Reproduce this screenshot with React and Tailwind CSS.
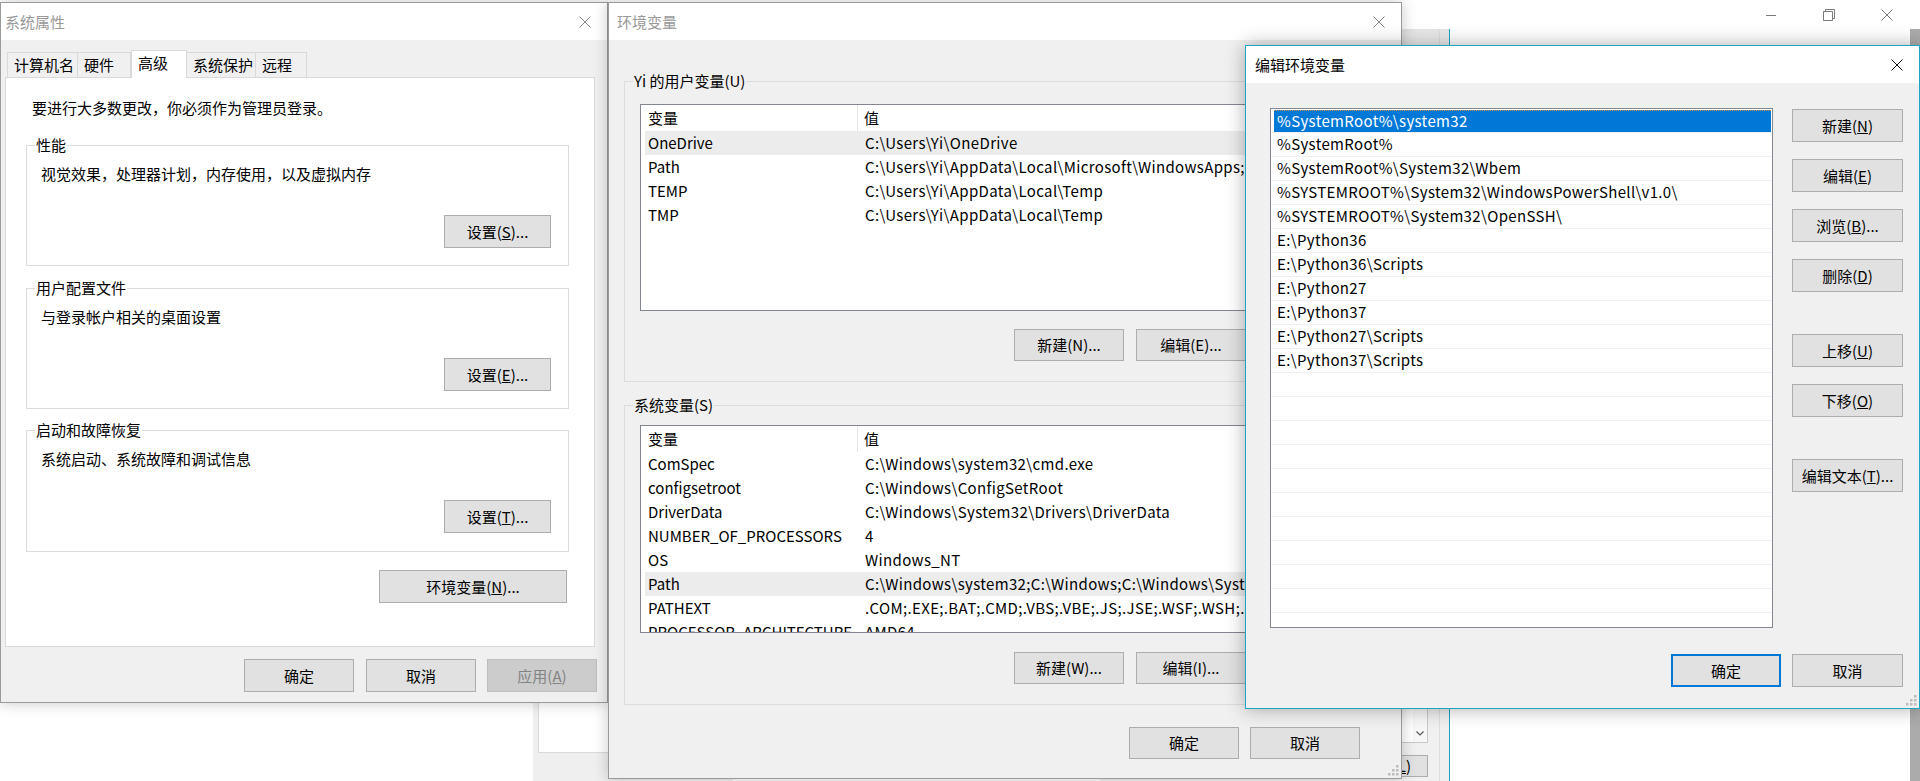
import React from 'react'

const userVars = [
  ['OneDrive', 'C:\\Users\\Yi\\OneDrive', true],
  ['Path', 'C:\\Users\\Yi\\AppData\\Local\\Microsoft\\WindowsApps;'],
  ['TEMP', 'C:\\Users\\Yi\\AppData\\Local\\Temp'],
  ['TMP', 'C:\\Users\\Yi\\AppData\\Local\\Temp'],
]

const sysVars = [
  ['ComSpec', 'C:\\Windows\\system32\\cmd.exe'],
  ['configsetroot', 'C:\\Windows\\ConfigSetRoot'],
  ['DriverData', 'C:\\Windows\\System32\\Drivers\\DriverData'],
  ['NUMBER_OF_PROCESSORS', '4'],
  ['OS', 'Windows_NT'],
  ['Path', 'C:\\Windows\\system32;C:\\Windows;C:\\Windows\\System32\\Wbem;', true],
  ['PATHEXT', '.COM;.EXE;.BAT;.CMD;.VBS;.VBE;.JS;.JSE;.WSF;.WSH;.MSC'],
  ['PROCESSOR_ARCHITECTURE', 'AMD64'],
]

const pathItems = [
  '%SystemRoot%\\system32',
  '%SystemRoot%',
  '%SystemRoot%\\System32\\Wbem',
  '%SYSTEMROOT%\\System32\\WindowsPowerShell\\v1.0\\',
  '%SYSTEMROOT%\\System32\\OpenSSH\\',
  'E:\\Python36',
  'E:\\Python36\\Scripts',
  'E:\\Python27',
  'E:\\Python37',
  'E:\\Python27\\Scripts',
  'E:\\Python37\\Scripts',
]

function CloseX({ color = '#8a8a8a' }) {
  return (
    <svg width="12" height="12" viewBox="0 0 12 12">
      <path d="M0.5 0.5 L11.5 11.5 M11.5 0.5 L0.5 11.5" stroke={color} strokeWidth="1" fill="none" />
    </svg>
  )
}

function Grip() {
  return (
    <svg width="12" height="12" viewBox="0 0 12 12">
      {[[9, 1], [5, 5], [9, 5], [1, 9], [5, 9], [9, 9]].map(([x, y], i) => (
        <rect key={i} x={x} y={y} width="2.5" height="2.5" fill="#bcbcbc" />
      ))}
    </svg>
  )
}

function TitleBar({ title, active, pl }) {
  return (
    <div className="h-[37px] bg-white flex items-center shrink-0">
      <span className={`${pl} ${active ? 'text-black' : 'text-[#999999]'} leading-[20px]`}>{title}</span>
      <div className="ml-auto w-[44px] h-full flex items-center justify-center">
        <CloseX color={active ? '#111111' : '#8a8a8a'} />
      </div>
    </div>
  )
}

function Btn({ children, className = '', disabled, primary }) {
  return (
    <div
      className={`flex items-center justify-center leading-[20px] whitespace-nowrap ${
        disabled
          ? 'bg-[#cccccc] border border-[#bfbfbf] text-[#838383]'
          : primary
          ? 'bg-[#e1e1e1] border-2 border-[#0078d7] text-black'
          : 'bg-[#e1e1e1] border border-[#adadad] text-black'
      } ${className}`}
    >
      {children}
    </div>
  )
}

function Group({ label, className = '', children }) {
  return (
    <div className={`relative border border-[#dcdcdc] flex flex-col ${className}`}>
      <span className="absolute -top-[11px] left-[8px] px-[1px] leading-[20px] bg-inherit whitespace-nowrap">
        {label}
      </span>
      {children}
    </div>
  )
}

function VarList({ rows, className }) {
  return (
    <div className={`border border-[#828790] bg-white overflow-hidden flex flex-col ${className}`}>
      <div className="h-[26px] flex items-center shrink-0">
        <div className="w-[217px] h-full flex items-center pl-[7px] border-r border-[#e5e5e5]">变量</div>
        <div className="pl-[6px]">值</div>
      </div>
      {rows.map(([k, v, hl]) => (
        <div
          key={k}
          className={`h-[24px] shrink-0 ml-[4px] flex items-center whitespace-nowrap ${hl ? 'bg-[#ececec]' : ''}`}
        >
          <div className="w-[220px] pl-[3px]">{k}</div>
          <div className="tracking-[0.35px]">{v}</div>
        </div>
      ))}
    </div>
  )
}

function SystemProps() {
  const tabs = [
    ['计算机名', 'w-[71px]'],
    ['硬件', 'w-[54px]'],
    ['高级', 'w-[56px]', true],
    ['系统保护', 'w-[70px]'],
    ['远程', 'w-[52px]'],
  ]
  return (
    <div className="absolute left-0 top-[2px] w-[608px] h-[701px] border border-[#9b9b9b] bg-[#f0f0f0] flex flex-col shadow-[0_0_14px_rgba(0,0,0,0.22)]">
      <TitleBar title="系统属性" pl="pl-[4px]" />
      <div className="flex flex-col px-[4px] pt-[10px]">
        <div className="flex items-end h-[27px] pl-[2px]">
          {tabs.map(([t, w, sel]) =>
            sel ? (
              <div
                key={t}
                className={`${w} h-[28px] -mb-px relative z-10 bg-white border border-b-0 border-[#d9d9d9] pl-[6px] pb-[2px] flex items-center`}
              >
                {t}
              </div>
            ) : (
              <div
                key={t}
                className={`${w} h-[25px] bg-[#f0f0f0] border border-b-0 border-[#d9d9d9] -ml-px first:ml-0 pl-[6px] pt-[1px] flex items-center`}
              >
                {t}
              </div>
            )
          )}
        </div>
        <div className="w-[590px] h-[570px] border border-[#d9d9d9] bg-white flex flex-col pl-[20px]">
          <p className="pt-[20px] pl-[6px] leading-[20px]">要进行大多数更改，你必须作为管理员登录。</p>
          <Group label="性能" className="mt-[27px] w-[543px] h-[121px] bg-white">
            <p className="pt-[18px] pl-[14px] leading-[20px]">视觉效果，处理器计划，内存使用，以及虚拟内存</p>
            <Btn className="self-end mr-[17px] mt-[31px] w-[107px] h-[33px]">
              设置(<u>S</u>)...
            </Btn>
          </Group>
          <Group label="用户配置文件" className="mt-[22px] w-[543px] h-[121px] bg-white">
            <p className="pt-[18px] pl-[14px] leading-[20px]">与登录帐户相关的桌面设置</p>
            <Btn className="self-end mr-[17px] mt-[31px] w-[107px] h-[33px]">
              设置(<u>E</u>)...
            </Btn>
          </Group>
          <Group label="启动和故障恢复" className="mt-[21px] w-[543px] h-[122px] bg-white">
            <p className="pt-[18px] pl-[14px] leading-[20px]">系统启动、系统故障和调试信息</p>
            <Btn className="self-end mr-[17px] mt-[31px] w-[107px] h-[33px]">
              设置(<u>T</u>)...
            </Btn>
          </Group>
          <Btn className="ml-[353px] mt-[18px] w-[188px] h-[33px]">
            环境变量(<u>N</u>)...
          </Btn>
        </div>
        <div className="flex mt-[12px] pl-[239px]">
          <Btn className="w-[110px] h-[33px]">确定</Btn>
          <Btn className="ml-[12px] w-[110px] h-[33px]">取消</Btn>
          <Btn disabled className="ml-[11px] w-[110px] h-[33px]">
            应用(<u>A</u>)
          </Btn>
        </div>
      </div>
    </div>
  )
}

function EnvVars() {
  return (
    <div className="absolute left-[608px] top-[2px] w-[794px] h-[777px] border border-[#9b9b9b] bg-[#f0f0f0] flex flex-col shadow-[0_0_14px_rgba(0,0,0,0.22)]">
      <TitleBar title="环境变量" pl="pl-[8px]" />
      <div className="flex flex-col pl-[15px]">
        <Group label="Yi 的用户变量(U)" className="mt-[41px] w-[762px] h-[301px] bg-[#f0f0f0]">
          <div className="pt-[22px] pl-[15px] flex flex-col">
            <VarList rows={userVars} className="w-[730px] h-[207px]" />
            <div className="flex mt-[18px] pl-[374px] gap-[12px]">
              <Btn className="w-[110px] h-[32px]">新建(N)...</Btn>
              <Btn className="w-[110px] h-[32px]">编辑(E)...</Btn>
              <Btn className="w-[110px] h-[32px]">删除(D)</Btn>
            </div>
          </div>
        </Group>
        <Group label="系统变量(S)" className="mt-[23px] w-[762px] h-[300px] bg-[#f0f0f0]">
          <div className="pt-[19px] pl-[15px] flex flex-col">
            <VarList rows={sysVars} className="w-[730px] h-[208px]" />
            <div className="flex mt-[19px] pl-[374px] gap-[12px]">
              <Btn className="w-[110px] h-[32px]">新建(W)...</Btn>
              <Btn className="w-[110px] h-[32px]">编辑(I)...</Btn>
              <Btn className="w-[110px] h-[32px]">删除(L)</Btn>
            </div>
          </div>
        </Group>
        <div className="flex mt-[22px] pl-[505px]">
          <Btn className="w-[110px] h-[32px]">确定</Btn>
          <Btn className="ml-[11px] w-[110px] h-[32px]">取消</Btn>
        </div>
      </div>
      <div className="mt-auto self-end mr-[2px] mb-[2px]">
        <Grip />
      </div>
    </div>
  )
}

function EditEnv() {
  const btns = [
    ['新建', 'N', '', 'mt-[1px]'],
    ['编辑', 'E', '', 'mt-[17px]'],
    ['浏览', 'B', '...', 'mt-[17px]'],
    ['删除', 'D', '', 'mt-[17px]'],
    ['上移', 'U', '', 'mt-[42px]'],
    ['下移', 'O', '', 'mt-[17px]'],
    ['编辑文本', 'T', '...', 'mt-[42px]'],
  ]
  const rows = [...pathItems, ...Array(11).fill('')]
  return (
    <div className="absolute left-[1245px] top-[45px] w-[675px] h-[664px] border border-[#1aa6c4] bg-[#f0f0f0] flex flex-col shadow-[0_0_18px_rgba(0,0,0,0.32)]">
      <TitleBar title="编辑环境变量" active pl="pl-[9px]" />
      <div className="flex pt-[25px] pl-[24px]">
        <div className="w-[503px] h-[520px] border border-[#828790] bg-white overflow-hidden flex flex-col tracking-[0.35px]">
          {rows.map((r, i) =>
            i === 0 ? (
              <div key={i} className="h-[24px] shrink-0 border-b border-[#f0f0f0] pt-[1px]">
                <div className="ml-[3px] mr-px h-[22px] bg-[#0078d7] text-white pl-[3px] flex items-center border-t border-dotted border-[#d08a3a]">
                  {r}
                </div>
              </div>
            ) : (
              <div
                key={i}
                className="h-[24px] shrink-0 border-b border-[#f0f0f0] pl-[6px] flex items-center whitespace-nowrap"
              >
                {r}
              </div>
            )
          )}
        </div>
        <div className="ml-[19px] flex flex-col">
          {btns.map(([t, k, dots, mt]) => (
            <Btn key={t} className={`${mt} w-[111px] h-[33px]`}>
              {t}(<u>{k}</u>){dots}
            </Btn>
          ))}
        </div>
      </div>
      <div className="flex mt-[26px] pl-[425px]">
        <Btn primary className="w-[110px] h-[33px]">
          确定
        </Btn>
        <Btn className="ml-[11px] w-[111px] h-[33px]">取消</Btn>
      </div>
      <div className="mt-auto self-end mr-[2px] mb-[2px]">
        <Grip />
      </div>
    </div>
  )
}

function BackWindow() {
  return (
    <div className="absolute left-[1100px] top-0 w-[820px] h-[781px] bg-[#f0f0f0] flex flex-col">
      <div className="h-[29px] bg-white flex justify-end pr-[4px] shrink-0">
        <div className="w-[58px] flex items-center justify-center">
          <svg width="12" height="12" viewBox="0 0 12 12">
            <path d="M1 6.5 H11" stroke="#7a7a7a" strokeWidth="1" />
          </svg>
        </div>
        <div className="w-[58px] flex items-center justify-center">
          <svg width="12" height="12" viewBox="0 0 12 12">
            <path d="M0.5 2.5 H9.5 V11.5 H0.5 Z M2.5 2.5 V0.5 H11.5 V9.5 H9.5" stroke="#7a7a7a" strokeWidth="1" fill="none" />
          </svg>
        </div>
        <div className="w-[58px] flex items-center justify-center">
          <CloseX color="#7a7a7a" />
        </div>
      </div>
      <div className="flex-1 flex bg-gradient-to-b from-[#e6e6e6] to-[#f0f0f0] to-[3%]">
        <div className="w-[339px] flex flex-col justify-end items-end pr-[11px] pb-[4px]">
          <div className="w-[120px] h-[60px] bg-white border border-[#c8c8c8] border-t-0 flex items-end justify-end">
            <div className="w-[14px] h-full bg-[#f7f7f7] flex items-end justify-center pb-[6px]">
              <svg width="8" height="5" viewBox="0 0 8 5">
                <path d="M0.5 0.5 L4 4 L7.5 0.5" stroke="#555555" strokeWidth="1.2" fill="none" />
              </svg>
            </div>
          </div>
          <div className="mt-[12px] w-[100px] h-[22px] bg-[#e1e1e1] border border-[#adadad] flex items-center justify-end pr-[16px] leading-[20px]">
            (<u>L</u>)
          </div>
        </div>
        <div className="w-px bg-[#dedede]" />
        <div className="w-[9px]" />
        <div className="w-px bg-[#1aa6c4]" />
        <div className="flex-1 bg-white" />
        <div className="w-[10px] bg-[#ababab]" />
      </div>
    </div>
  )
}

export default function App() {
  return (
    <div className="relative w-[1920px] h-[781px] overflow-hidden bg-white text-black text-[15px] font-['Noto_Sans_CJK_SC',sans-serif]">
      <BackWindow />
      <div className="absolute left-[533px] top-[560px] w-[200px] h-[221px] bg-[#efefef] pl-[5px]">
        <div className="h-[193px] bg-white border border-[#dadada]" />
      </div>
      <SystemProps />
      <EnvVars />
      <EditEnv />
    </div>
  )
}
